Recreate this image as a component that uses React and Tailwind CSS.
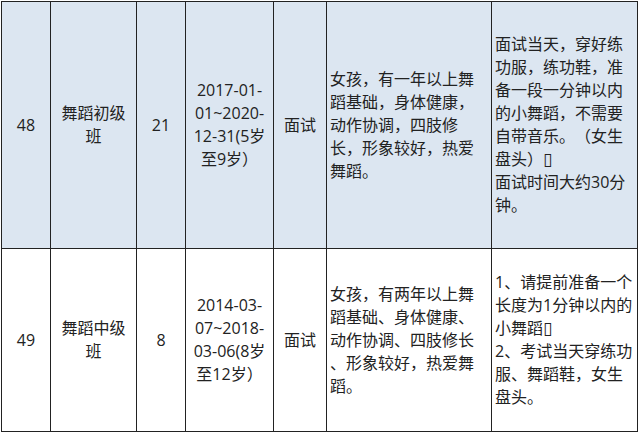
const rows = [
  {
    bg: 'bg-[#dce6f1]',
    no: '48',
    name: ['舞蹈初级', '班'],
    count: '21',
    age: ['2017-01-', '01~2020-', '12-31(5岁', '至9岁）'],
    way: '面试',
    req: ['女孩，有一年以上舞', '蹈基础，身体健康，', '动作协调，四肢修', '长，形象较好，热爱', '舞蹈。'],
    note: ['面试当天，穿好练', '功服，练功鞋，准', '备一段一分钟以内', '的小舞蹈，不需要', '自带音乐。（女生', '盘头）▯', '面试时间大约30分', '钟。'],
  },
  {
    bg: 'bg-white',
    no: '49',
    name: ['舞蹈中级', '班'],
    count: '8',
    age: ['2014-03-', '07~2018-', '03-06(8岁', '至12岁）'],
    way: '面试',
    req: ['女孩，有两年以上舞', '蹈基础、身体健康、', '动作协调、四肢修长', '、形象较好，热爱舞', '蹈。'],
    note: ['1、请提前准备一个', '长度为1分钟以内的', '小舞蹈▯', '2、考试当天穿练功', '服、舞蹈鞋，女生', '盘头。'],
  },
]

function Lines({ lines }) {
  return lines.map((l, i) => (
    <div key={i} className="whitespace-nowrap">
      {l.includes('▯') ? (
        <>
          {l.replace('▯', '')}
          <span className="font-['DejaVu_Sans',sans-serif] text-[17px]">▯</span>
        </>
      ) : (
        l
      )}
    </div>
  ))
}

function Cell({ bg, left, children }) {
  return (
    <div
      className={`flex flex-col justify-center border-r border-b border-[#222] ${bg} ${
        left ? 'items-start pl-[3px]' : 'items-center text-center'
      }`}
    >
      {children}
    </div>
  )
}

export default function App() {
  return (
    <div className="h-[434px] w-[640px] bg-white pl-px pt-px">
      <div className="grid w-fit grid-cols-[49px_86px_49px_88px_53px_165px_146px] grid-rows-[247px_183px] border-l border-t border-[#222] font-['Open_Sans','Noto_Sans_CJK_SC',sans-serif] text-[16px] leading-[23px] text-[#222] [text-spacing-trim:space-all]">
        {rows.map((r) => (
          <div key={r.no} className="contents">
            <Cell bg={r.bg}>{r.no}</Cell>
            <Cell bg={r.bg}>
              <Lines lines={r.name} />
            </Cell>
            <Cell bg={r.bg}>{r.count}</Cell>
            <Cell bg={r.bg}>
              <Lines lines={r.age} />
            </Cell>
            <Cell bg={r.bg}>{r.way}</Cell>
            <Cell bg={r.bg} left>
              <Lines lines={r.req} />
            </Cell>
            <Cell bg={r.bg} left>
              <Lines lines={r.note} />
            </Cell>
          </div>
        ))}
      </div>
    </div>
  )
}
